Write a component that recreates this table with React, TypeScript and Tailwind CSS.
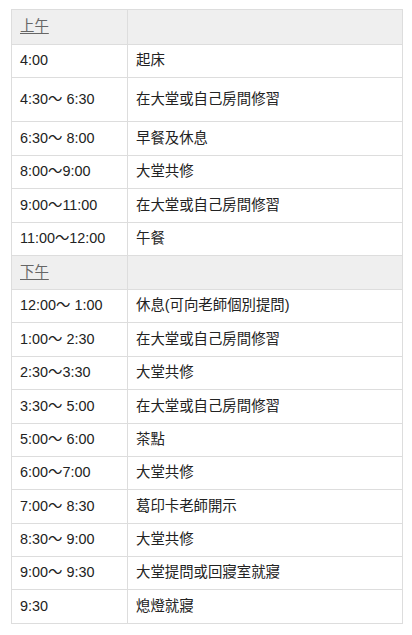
const morning = [
  { time: "4:00", what: "起床" },
  { time: "4:30〜 6:30", what: "在大堂或自己房間修習", tall: true },
  { time: "6:30〜 8:00", what: "早餐及休息" },
  { time: "8:00〜9:00", what: "大堂共修" },
  { time: "9:00〜11:00", what: "在大堂或自己房間修習" },
  { time: "11:00〜12:00", what: "午餐" },
];

const afternoon = [
  { time: "12:00〜 1:00", what: "休息(可向老師個別提問)" },
  { time: "1:00〜 2:30", what: "在大堂或自己房間修習" },
  { time: "2:30〜3:30", what: "大堂共修" },
  { time: "3:30〜 5:00", what: "在大堂或自己房間修習" },
  { time: "5:00〜 6:00", what: "茶點" },
  { time: "6:00〜7:00", what: "大堂共修" },
  { time: "7:00〜 8:30", what: "葛印卡老師開示" },
  { time: "8:30〜 9:00", what: "大堂共修" },
  { time: "9:00〜 9:30", what: "大堂提問或回寢室就寢" },
  { time: "9:30", what: "熄燈就寢" },
];

type Row = { time: string; what: string; tall?: boolean };

const SectionHead = ({ label, first }: { label: string; first?: boolean }) => (
  <tr className={first ? "h-[35px] bg-[#efefef]" : "h-[34px] bg-[#efefef]"}>
    <td className="border border-[#dddddd] px-2 align-middle">
      <a href="#" className="text-[#666666] underline underline-offset-2 decoration-[#666666]">
        {label}
      </a>
    </td>
    <td className="border border-[#dddddd] px-2"></td>
  </tr>
);

const ScheduleRow = ({ row }: { row: Row }) => (
  <tr className={row.tall ? "h-[44px]" : "h-[33.4px]"}>
    <td className="border border-[#dddddd] px-2 align-middle whitespace-nowrap">{row.time}</td>
    <td className="border border-[#dddddd] px-2 align-middle">{row.what}</td>
  </tr>
);

export default function App() {
  return (
    <div className="bg-white w-[412px] min-h-[635px] pt-[9px] px-[11px] font-['Liberation_Sans','Noto_Sans_CJK_TC',sans-serif] text-[14.4px] text-[#222222]">
      <table className="w-[392px] border-collapse table-fixed">
        <colgroup>
          <col className="w-[116px]" />
          <col />
        </colgroup>
        <tbody>
          <SectionHead label="上午" first />
          {morning.map((r) => (
            <ScheduleRow key={r.time} row={r} />
          ))}
          <SectionHead label="下午" />
          {afternoon.map((r) => (
            <ScheduleRow key={r.time} row={r} />
          ))}
        </tbody>
      </table>
    </div>
  );
}
